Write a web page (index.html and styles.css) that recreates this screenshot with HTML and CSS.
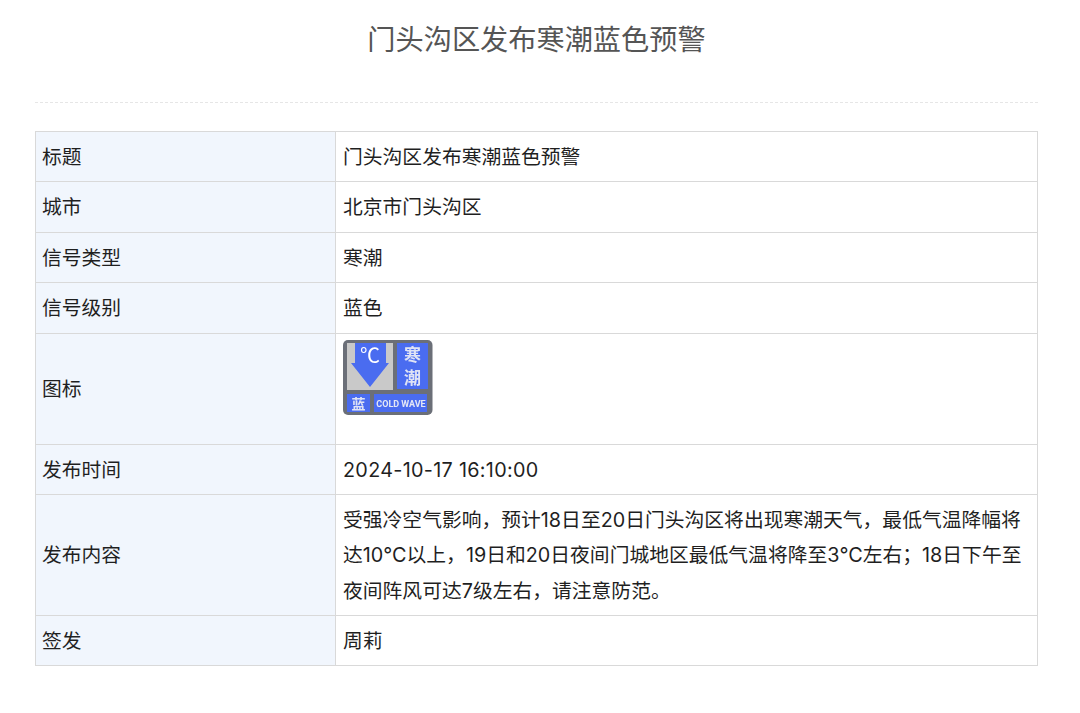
FILE: index.html
```html
<!DOCTYPE html>
<html lang="zh-CN">
<head>
<meta charset="utf-8">
<title>门头沟区发布寒潮蓝色预警</title>
<link rel="stylesheet" href="styles.css">
</head>
<body>
<main class="page">
  <h1 class="title">门头沟区发布寒潮蓝色预警</h1>
  <table class="info">
    <colgroup><col class="col-label"><col></colgroup>
    <tbody>
      <tr><th>标题</th><td>门头沟区发布寒潮蓝色预警</td></tr>
      <tr><th>城市</th><td>北京市门头沟区</td></tr>
      <tr><th>信号类型</th><td>寒潮</td></tr>
      <tr><th>信号级别</th><td>蓝色</td></tr>
      <tr class="icon-row"><th>图标</th><td>
        <svg class="badge" width="90" height="76" viewBox="0 0 90 76" role="img" aria-label="寒潮蓝色预警图标">
          <rect x="0" y="0" width="89.5" height="75" rx="5" fill="#6b6f78"/>
          <rect x="4" y="3" width="46" height="47" fill="#c9c9c9"/>
          <path d="M12 3H43V23H46L27 47L8 23H12Z" fill="#4a6cf0"/>
          <rect x="54" y="3" width="31" height="46" fill="#4a6cf0"/>
          <rect x="4" y="54" width="23" height="18" fill="#4a6cf0"/>
          <rect x="31" y="54" width="53" height="18" fill="#4a6cf0"/>
          <text x="27" y="23" class="b-temp">℃</text>
          <text x="69.5" y="21" class="b-cn">寒</text>
          <text x="69.5" y="44" class="b-cn">潮</text>
          <text x="15.5" y="69" class="b-small">蓝</text>
          <text x="58" y="67" class="b-en">COLD WAVE</text>
        </svg>
      </td></tr>
      <tr><th>发布时间</th><td class="date">2024-10-17 16:10:00</td></tr>
      <tr><th>发布内容</th><td>受强冷空气影响，预计18日至20日门头沟区将出现寒潮天气，最低气温降幅将达10℃以上，19日和20日夜间门城地区最低气温将降至3℃左右；18日下午至夜间阵风可达7级左右，请注意防范。</td></tr>
      <tr class="last-row"><th>签发</th><td>周莉</td></tr>
    </tbody>
  </table>
</main>
</body>
</html>
```
FILE: styles.css
```css
* { box-sizing: border-box; }
html, body { margin: 0; background: #fff; }
body {
  font-family: "Inter", "Noto Sans CJK SC", sans-serif;
  color: #1f1f1f;
}
.page { width: 1003px; margin-left: 35px; }
.title {
  margin: 0;
  height: 103px;
  padding-top: 19px;
  border-bottom: 1px dashed #e6e6e6;
  text-align: center;
  font-size: 28.2px;
  line-height: 42px;
  font-weight: 400;
  color: #555;
}
.info {
  width: 1003px;
  margin-top: 28px;
  border-collapse: collapse;
  table-layout: fixed;
  font-size: 19.8px;
  line-height: 35.4px;
}
.col-label { width: 300px; }
.info th, .info td {
  border: 1px solid #d9d9d9;
  padding: 8px 7px 6px 7px;
  font-weight: 400;
  text-align: left;
}
.info th { background: #f1f6fd; padding-left: 6px; }
.info .date { letter-spacing: 0.3px; }
.icon-row td { padding-top: 6px; }
.info .last-row th, .info .last-row td { padding-bottom: 5px; }
.badge { display: block; margin-bottom: 22px; filter: blur(0.4px); }
.b-temp { font: 400 20px "Noto Sans CJK SC", sans-serif; fill: #fff; text-anchor: middle; }
.b-cn { font: 700 17px "Noto Sans CJK SC", sans-serif; fill: #dfe3f5; text-anchor: middle; }
.b-small { font: 700 14px "Noto Sans CJK SC", sans-serif; fill: #dfe3f5; text-anchor: middle; }
.b-en { font: 700 9px "Roboto", sans-serif; fill: #e4e7f5; text-anchor: middle; }
```
